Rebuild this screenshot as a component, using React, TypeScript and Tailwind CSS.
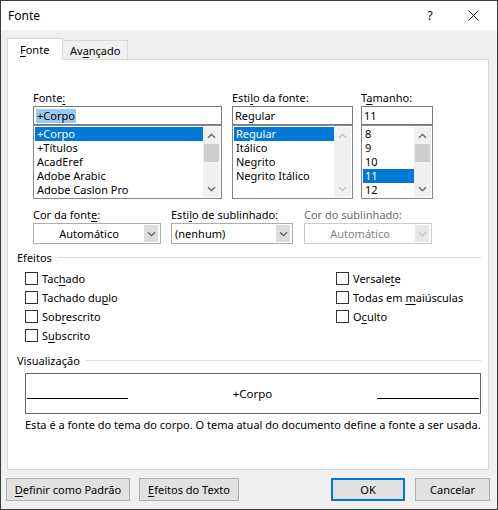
import React from "react";

function U({ children }: { readonly children: React.ReactNode }) {
  return <span className="underline decoration-1 underline-offset-[2px]">{children}</span>;
}

function Chevron({ up = false, color = "#606060" }: { readonly up?: boolean; readonly color?: string }) {
  return (
    <svg width="9" height="6" viewBox="0 0 9 6" className={up ? "rotate-180" : ""}>
      <path d="M1 1.2 L4.5 4.7 L8 1.2" fill="none" stroke={color} strokeWidth="1.3" />
    </svg>
  );
}

function ScrollBar({ thumb, disabled = false }: { readonly thumb: boolean; readonly disabled?: boolean }) {
  const c = disabled ? "#bfbfbf" : "#606060";
  return (
    <div className="flex w-[17px] shrink-0 flex-col bg-[#f0f0f0]">
      <div className="flex h-[17px] items-center justify-center">
        <Chevron up color={c} />
      </div>
      <div className="flex-1 px-px">{thumb && <div className="h-[18px] bg-[#cdcdcd]" />}</div>
      <div className="flex h-[17px] items-center justify-center">
        <Chevron color={c} />
      </div>
    </div>
  );
}

function ListBox({
  items,
  selected,
  thumb,
  disabled,
}: {
  readonly items: string[];
  readonly selected: number;
  readonly thumb: boolean;
  readonly disabled?: boolean;
}) {
  return (
    <div className="flex h-[74px] border border-[#828790] bg-white p-px">
      <div className="min-w-0 flex-1 overflow-hidden">
        {items.map((it, i) => (
          <div
            key={it}
            className={`h-[14px] whitespace-nowrap pl-[2px] leading-[14px] ${i === selected ? "bg-[#0078d7] text-white" : ""}`}
          >
            {it}
          </div>
        ))}
      </div>
      <ScrollBar thumb={thumb} disabled={disabled} />
    </div>
  );
}

function Combo({
  value,
  center = false,
  disabled = false,
  width,
}: {
  readonly value: string;
  readonly center?: boolean;
  readonly disabled?: boolean;
  readonly width: string;
}) {
  return (
    <div
      className={`flex h-[21px] ${width} items-stretch border bg-white ${disabled ? "border-[#cccccc] text-[#838383]" : "border-[#adadad]"}`}
    >
      <div className={`flex flex-1 items-center ${center ? "justify-center" : "pl-[3px]"}`}>{value}</div>
      <div
        className={`my-px mr-[2px] flex w-[14px] items-center justify-center ${disabled ? "bg-[#e8e8e8]" : "bg-[#dcdcdc]"}`}
      >
        <Chevron color={disabled ? "#c4c4c4" : "#606060"} />
      </div>
    </div>
  );
}

function Check({ children }: { readonly children: React.ReactNode }) {
  return (
    <div className="flex h-[19px] items-center">
      <div className="h-[13px] w-[13px] border border-[#333333] bg-white" />
      <span className="ml-[4px]">{children}</span>
    </div>
  );
}

function GroupTitle({ children }: { readonly children: React.ReactNode }) {
  return (
    <div className="flex h-[15px] items-center pl-[9px] pr-[7px]">
      <span className="leading-[15px]">{children}</span>
      <div className="ml-[6px] h-px flex-1 bg-[#dcdcdc]" />
    </div>
  );
}

function Button({ children, primary = false, width }: { readonly children: React.ReactNode; readonly primary?: boolean; readonly width: string }) {
  return (
    <div
      className={`flex h-[23px] ${width} items-center justify-center bg-[#e1e1e1] ${primary ? "border-2 border-[#0078d7]" : "border border-[#adadad]"}`}
    >
      {children}
    </div>
  );
}

export default function App() {
  return (
    <div className="h-[510px] w-[498px] overflow-hidden border border-[#3c3c3c] bg-[#f0f0f0] font-['Noto_Sans',sans-serif] text-[11px] leading-[15px] text-black">
      {/* title bar */}
      <div className="flex h-[29px] items-center bg-white">
        <span className="ml-[7px] flex-1 text-[12px]">Fonte</span>
        <span className="w-[14px] text-center text-[12px]">?</span>
        <div className="ml-[31px] mr-[18px] flex items-center">
          <svg width="11" height="11" viewBox="0 0 11 11">
            <path d="M0.5 0.5 L10.5 10.5 M10.5 0.5 L0.5 10.5" stroke="#111" strokeWidth="1" />
          </svg>
        </div>
      </div>

      {/* tabs */}
      <div className="ml-[6px] mt-[8px] flex h-[21px] items-end">
        <div className="relative z-10 -mb-px flex h-[22px] w-[56px] items-center border border-b-0 border-[#d9d9d9] bg-white pl-[12px]">
          <span>
            <U>F</U>onte
          </span>
        </div>
        <div className="flex h-[19px] w-[65px] items-center border border-b-0 border-l-0 border-[#d9d9d9] bg-[#f0f0f0] pl-[7px]">
          <span>
            Av<U>a</U>nçado
          </span>
        </div>
      </div>

      {/* panel */}
      <div className="ml-[6px] h-[411px] w-[482px] border border-[#d9d9d9] bg-white pt-[30px]">
        <div className="flex pl-[25px]">
          <div className="w-[189px]">
            <div className="h-[16px]">
              Fonte<U>:</U>
            </div>
            <div className="flex h-[19px] items-center border border-[#7a7a7a] px-[2px]">
              <span className="bg-[#99c9ef] px-px leading-[14px]">+Corpo</span>
            </div>
            <ListBox items={["+Corpo", "+Títulos", "AcadEref", "Adobe Arabic", "Adobe Caslon Pro"]} selected={0} thumb />
          </div>
          <div className="ml-[10px] w-[121px]">
            <div className="h-[16px]">
              Esti<U>l</U>o da fonte:
            </div>
            <div className="flex h-[19px] items-center border border-[#7a7a7a] px-[2px]">Regular</div>
            <ListBox items={["Regular", "Itálico", "Negrito", "Negrito Itálico"]} selected={0} thumb={false} disabled />
          </div>
          <div className="ml-[8px] w-[72px]">
            <div className="h-[16px]">
              T<U>a</U>manho:
            </div>
            <div className="flex h-[19px] items-center border border-[#7a7a7a] px-[2px]">11</div>
            <ListBox items={["8", "9", "10", "11", "12"]} selected={3} thumb />
          </div>
        </div>

        <div className="mt-[8px] flex pl-[25px]">
          <div>
            <div className="h-[16px]">
              Cor da font<U>e</U>:
            </div>
            <Combo value="Automático" center width="w-[128px]" />
          </div>
          <div className="ml-[10px]">
            <div className="h-[16px]">
              Esti<U>l</U>o de sublinhado:
            </div>
            <Combo value="(nenhum)" width="w-[122px]" />
          </div>
          <div className="ml-[11px]">
            <div className="h-[16px] text-[#6d6d6d]">Cor do sublinhado:</div>
            <Combo value="Automático" center disabled width="w-[128px]" />
          </div>
        </div>

        <div className="mt-[6px]">
          <GroupTitle>Efeitos</GroupTitle>
          <div className="mt-[4px] flex pl-[17px]">
            <div className="w-[311px]">
              <Check>
                Tac<U>h</U>ado
              </Check>
              <Check>
                Tachado du<U>p</U>lo
              </Check>
              <Check>
                Sob<U>r</U>escrito
              </Check>
              <Check>
                S<U>u</U>bscrito
              </Check>
            </div>
            <div>
              <Check>
                Versale<U>t</U>e
              </Check>
              <Check>
                Todas em <U>m</U>aiúsculas
              </Check>
              <Check>
                O<U>c</U>ulto
              </Check>
            </div>
          </div>
        </div>

        <div className="mt-[8px]">
          <GroupTitle>Visualização</GroupTitle>
          <div className="ml-[17px] mt-[5px] flex h-[41px] w-[456px] items-end border border-[#646464] px-px pb-[14px]">
            <div className="h-px w-[101px] bg-black" />
            <div className="flex-1 text-center text-[11.5px] leading-[18px]">
              <span className="relative top-[4px]">+Corpo</span>
            </div>
            <div className="h-px w-[102px] bg-black" />
          </div>
          <div className="ml-[17px] mt-[3px] whitespace-nowrap">
            Esta é a fonte do tema do corpo. O tema atual do documento define a fonte a ser usada.
          </div>
        </div>
      </div>

      {/* buttons */}
      <div className="mt-[8px] flex px-[5px]">
        <Button width="w-[124px]">
          <span>
            <U>D</U>efinir como Padrão
          </span>
        </Button>
        <div className="ml-[9px]">
          <Button width="w-[100px]">
            <span>
              <U>E</U>feitos do Texto
            </span>
          </Button>
        </div>
        <div className="ml-auto flex gap-[10px] pr-[2px]">
          <Button primary width="w-[74px]">
            OK
          </Button>
          <Button width="w-[75px]">Cancelar</Button>
        </div>
      </div>
    </div>
  );
}
